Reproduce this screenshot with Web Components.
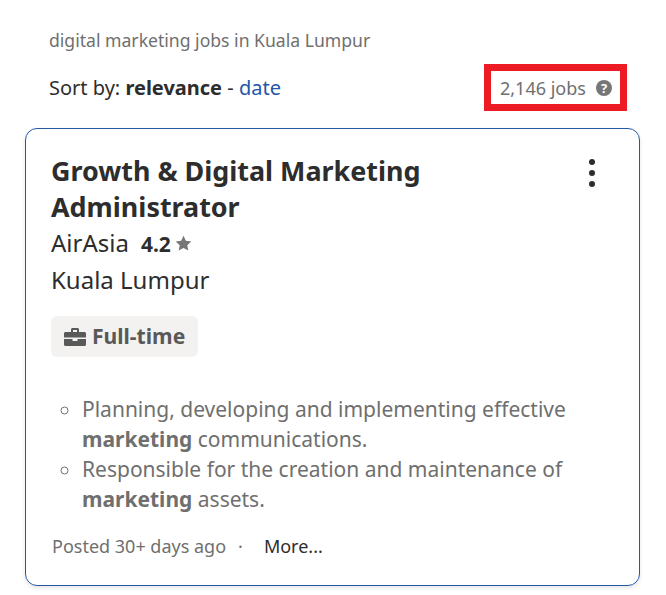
<!DOCTYPE html>
<html><head><meta charset="utf-8"><style>
html,body{margin:0;padding:0;background:#fff;overflow:hidden}
body{width:666px;height:595px;font-family:"Noto Sans",sans-serif}
</style></head><body>
<job-page></job-page>
<script>
class JobHeader extends HTMLElement{constructor(){super();this.attachShadow({mode:'open'}).innerHTML=`<style>
:host{display:block;padding:28px 39px 0 49px;height:100px;box-sizing:border-box}
.t{font-size:17.6px;line-height:24px;color:#6f6f6f;height:24px}
.r{display:flex;justify-content:space-between;align-items:center;margin-top:0;height:47px;padding-top:12px}
.s{font-size:20px;color:#2d2d2d;line-height:28px}
b{font-weight:700}
a{color:#2557a7;text-decoration:none}
.c{box-sizing:border-box;display:flex;align-items:center;gap:10px;height:47px;width:143px;border:7px solid #ed1c24;padding-left:9px;font-size:18px;color:#6f6f6f}
</style><div class="t">digital marketing jobs in Kuala Lumpur</div>
<div class="r"><div class="s">Sort by: <b>relevance</b> - <a>date</a></div>
<div class="c"><span>2,146 jobs</span><svg width="16" height="16" viewBox="0 0 16 16"><circle cx="8" cy="8" r="8" fill="#767676"/><text x="8" y="12.800" font-size="13" font-weight="700" text-anchor="middle" fill="#fff" font-family="Noto Sans">?</text></svg></div></div>`}}
customElements.define('job-header',JobHeader);
class JobCard extends HTMLElement{constructor(){super();this.attachShadow({mode:'open'}).innerHTML=`<style>
:host{display:block;box-sizing:border-box;margin:0 26px 0 25px;width:615px;height:458px;border:1px solid #2557a7;border-radius:12px;padding:24px 25px 0;position:relative;box-shadow:0 2px 4px rgba(0,0,0,.1)}
h2{margin:0;font-size:26.9px;line-height:36px;font-weight:700;color:#2d2d2d;width:480px}
.co{display:flex;align-items:center;font-size:24px;line-height:36px;color:#2d2d2d}
.co b{font-size:21px;font-weight:700;margin-left:12px;position:relative;top:1px}
.co svg{margin-left:4px}
.loc{font-size:24px;line-height:36px;color:#2d2d2d;padding-top:1px}
.tag{display:inline-flex;align-items:center;gap:6px;margin-top:18px;height:41px;padding:0 13px 0 13px;background:#f3f2f1;border-radius:6px;font-size:21.1px;font-weight:700;color:#595959}
.tag span{position:relative;top:-1px}
ul{margin:37px 0 0;padding:0 0 0 31px;font-size:21px;line-height:30px;color:#6f6f6f;list-style:circle}
ul b{color:#6f6f6f}
.f{display:flex;align-items:center;margin:17px 0 0 1px;font-size:18px;color:#6f6f6f;line-height:30px}
.f i{font-style:normal;margin:0 21px 0 12px}
.f span:last-child{color:#2d2d2d}
.m{position:absolute;top:30px;right:44px;display:flex;flex-direction:column;gap:5px}
.m u{width:6px;height:6px;border-radius:50%;background:#2d2d2d;display:block}
</style>
<div class="m"><u></u><u></u><u></u></div>
<h2>Growth &amp; Digital Marketing Administrator</h2>
<div class="co">AirAsia<b>4.2</b><svg width="17" height="17" viewBox="0 0 24 24"><path fill="#767676" d="M12 1l3.300 7.200 7.700.9-5.700 5.300 1.500 7.600L12 18.200 5.200 22l1.500-7.600L1 9.100l7.700-.9z"/></svg></div>
<div class="loc">Kuala Lumpur</div>
<div class="tag"><svg width="22" height="18" viewBox="0 0 22 18"><path fill="#595959" d="M7 1.500C7 .7 7.700 0 8.500 0h5c.8 0 1.500.7 1.500 1.500V4h5.500C21.300 4 22 4.700 22 5.500V9.500H0V5.500C0 4.700.7 4 1.500 4H7zM9 2v2h4V2zM0 11h8.500v2h5v-2H22v5.500C22 17.300 21.300 18 20.500 18h-19C.7 18 0 17.300 0 16.500z"/></svg><span>Full-time</span></div>
<ul><li>Planning, developing and implementing effective <b>marketing</b> communications.</li><li>Responsible for the creation and maintenance of <b>marketing</b> assets.</li></ul>
<div class="f"><span>Posted 30+ days ago</span><i>·</i><span>More...</span></div>`}}
customElements.define('job-card',JobCard);
class JobPage extends HTMLElement{constructor(){super();this.attachShadow({mode:'open'}).innerHTML=`<style>:host{display:block}</style><job-header></job-header><div style="height:28px"></div><job-card></job-card>`}}
customElements.define('job-page',JobPage);
</script></body></html>
